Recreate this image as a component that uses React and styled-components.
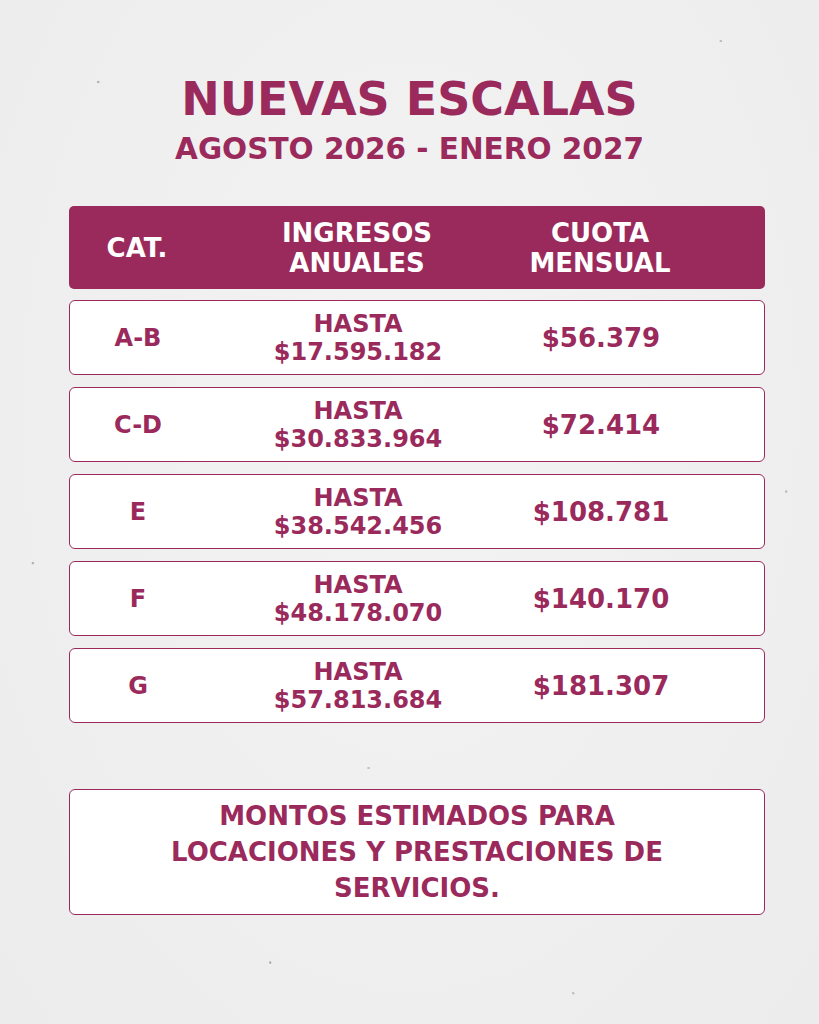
import React from 'react';
import styled, { createGlobalStyle } from 'styled-components';

const GlobalStyle = createGlobalStyle`
  html, body {
    margin: 0;
    padding: 0;
  }
  body {
    font-family: "DejaVu Sans", "Liberation Sans", sans-serif;
    font-weight: 700;
  }
`;

const MAGENTA = '#9b2a5c';

const rows = [
  { cat: 'A-B', limit: '$17.595.182', fee: '$56.379' },
  { cat: 'C-D', limit: '$30.833.964', fee: '$72.414' },
  { cat: 'E', limit: '$38.542.456', fee: '$108.781' },
  { cat: 'F', limit: '$48.178.070', fee: '$140.170' },
  { cat: 'G', limit: '$57.813.684', fee: '$181.307' },
];

/* paper-like grey background with a few specks */
const Page = styled.div`
  width: 819px;
  height: 1024px;
  box-sizing: border-box;
  padding: 76px 54px 0 69px;
  background-color: #eeeeee;
  background-image:
    radial-gradient(circle at 12% 8%, rgba(0, 0, 0, 0.25) 0 1px, transparent 1.5px),
    radial-gradient(circle at 88% 4%, rgba(0, 0, 0, 0.2) 0 1px, transparent 1.5px),
    radial-gradient(circle at 4% 55%, rgba(0, 0, 0, 0.25) 0 1px, transparent 1.5px),
    radial-gradient(circle at 96% 48%, rgba(0, 0, 0, 0.2) 0 1px, transparent 1.5px),
    radial-gradient(circle at 33% 94%, rgba(0, 0, 0, 0.25) 0 1px, transparent 1.5px),
    radial-gradient(circle at 70% 97%, rgba(0, 0, 0, 0.2) 0 1px, transparent 1.5px),
    radial-gradient(circle at 45% 75%, rgba(0, 0, 0, 0.18) 0 1px, transparent 1.5px),
    radial-gradient(circle at 20% 30%, rgba(0, 0, 0, 0.15) 0 1px, transparent 1.5px),
    radial-gradient(ellipse at 50% 40%, #f3f3f3 0%, #ececec 100%);
  color: ${MAGENTA};
  display: flex;
  flex-direction: column;
`;

const Header = styled.header`
  display: flex;
  flex-direction: column;
  align-items: center;
  text-align: center;
  margin-left: -15px;
`;

const Title = styled.h1`
  margin: 0;
  font-size: 46px;
  line-height: 46px;
  font-weight: 700;
`;

const Subtitle = styled.h2`
  margin: 12px 0 0;
  font-size: 29.5px;
  line-height: 30px;
  font-weight: 700;
`;

const Table = styled.div`
  margin-top: 42px;
  display: flex;
  flex-direction: column;
  gap: 12px;
`;

const columns = '136px 304px 182px 1fr';

const HeadRow = styled.div`
  display: grid;
  grid-template-columns: ${columns};
  align-items: center;
  height: 83px;
  background: ${MAGENTA};
  border-radius: 5px;
  color: #ffffff;
  text-align: center;
  margin-bottom: -1px;
`;

const Row = styled.div`
  display: grid;
  grid-template-columns: ${columns};
  align-items: center;
  height: 75px;
  box-sizing: border-box;
  background: #ffffff;
  border: 1.5px solid ${MAGENTA};
  border-radius: 6px;
  text-align: center;
`;

const Cell = styled.div`
  font-size: ${(p) => p.size || 24}px;
  line-height: ${(p) => p.lh || 28}px;
`;

const Note = styled.div`
  margin-top: 66px;
  height: 126px;
  box-sizing: border-box;
  background: #ffffff;
  border: 1.5px solid ${MAGENTA};
  border-radius: 6px;
  display: flex;
  align-items: center;
  justify-content: center;
  text-align: center;
  font-size: 26px;
  line-height: 36px;
  padding: 0 60px;
`;

export default function App() {
  return (
    <>
      <GlobalStyle />
      <Page>
        <Header>
          <Title>NUEVAS ESCALAS</Title>
          <Subtitle>AGOSTO 2026 - ENERO 2027</Subtitle>
        </Header>

        <Table>
          <HeadRow>
            <Cell size={26} lh={30}>CAT.</Cell>
            <Cell size={26} lh={30}>INGRESOS<br />ANUALES</Cell>
            <Cell size={26} lh={30}>CUOTA<br />MENSUAL</Cell>
            <span />
          </HeadRow>

          {rows.map((r) => (
            <Row key={r.cat}>
              <Cell>{r.cat}</Cell>
              <Cell>HASTA<br />{r.limit}</Cell>
              <Cell size={26}>{r.fee}</Cell>
              <span />
            </Row>
          ))}
        </Table>

        <Note>
          MONTOS ESTIMADOS PARA<br />
          LOCACIONES Y PRESTACIONES DE<br />
          SERVICIOS.
        </Note>
      </Page>
    </>
  );
}
